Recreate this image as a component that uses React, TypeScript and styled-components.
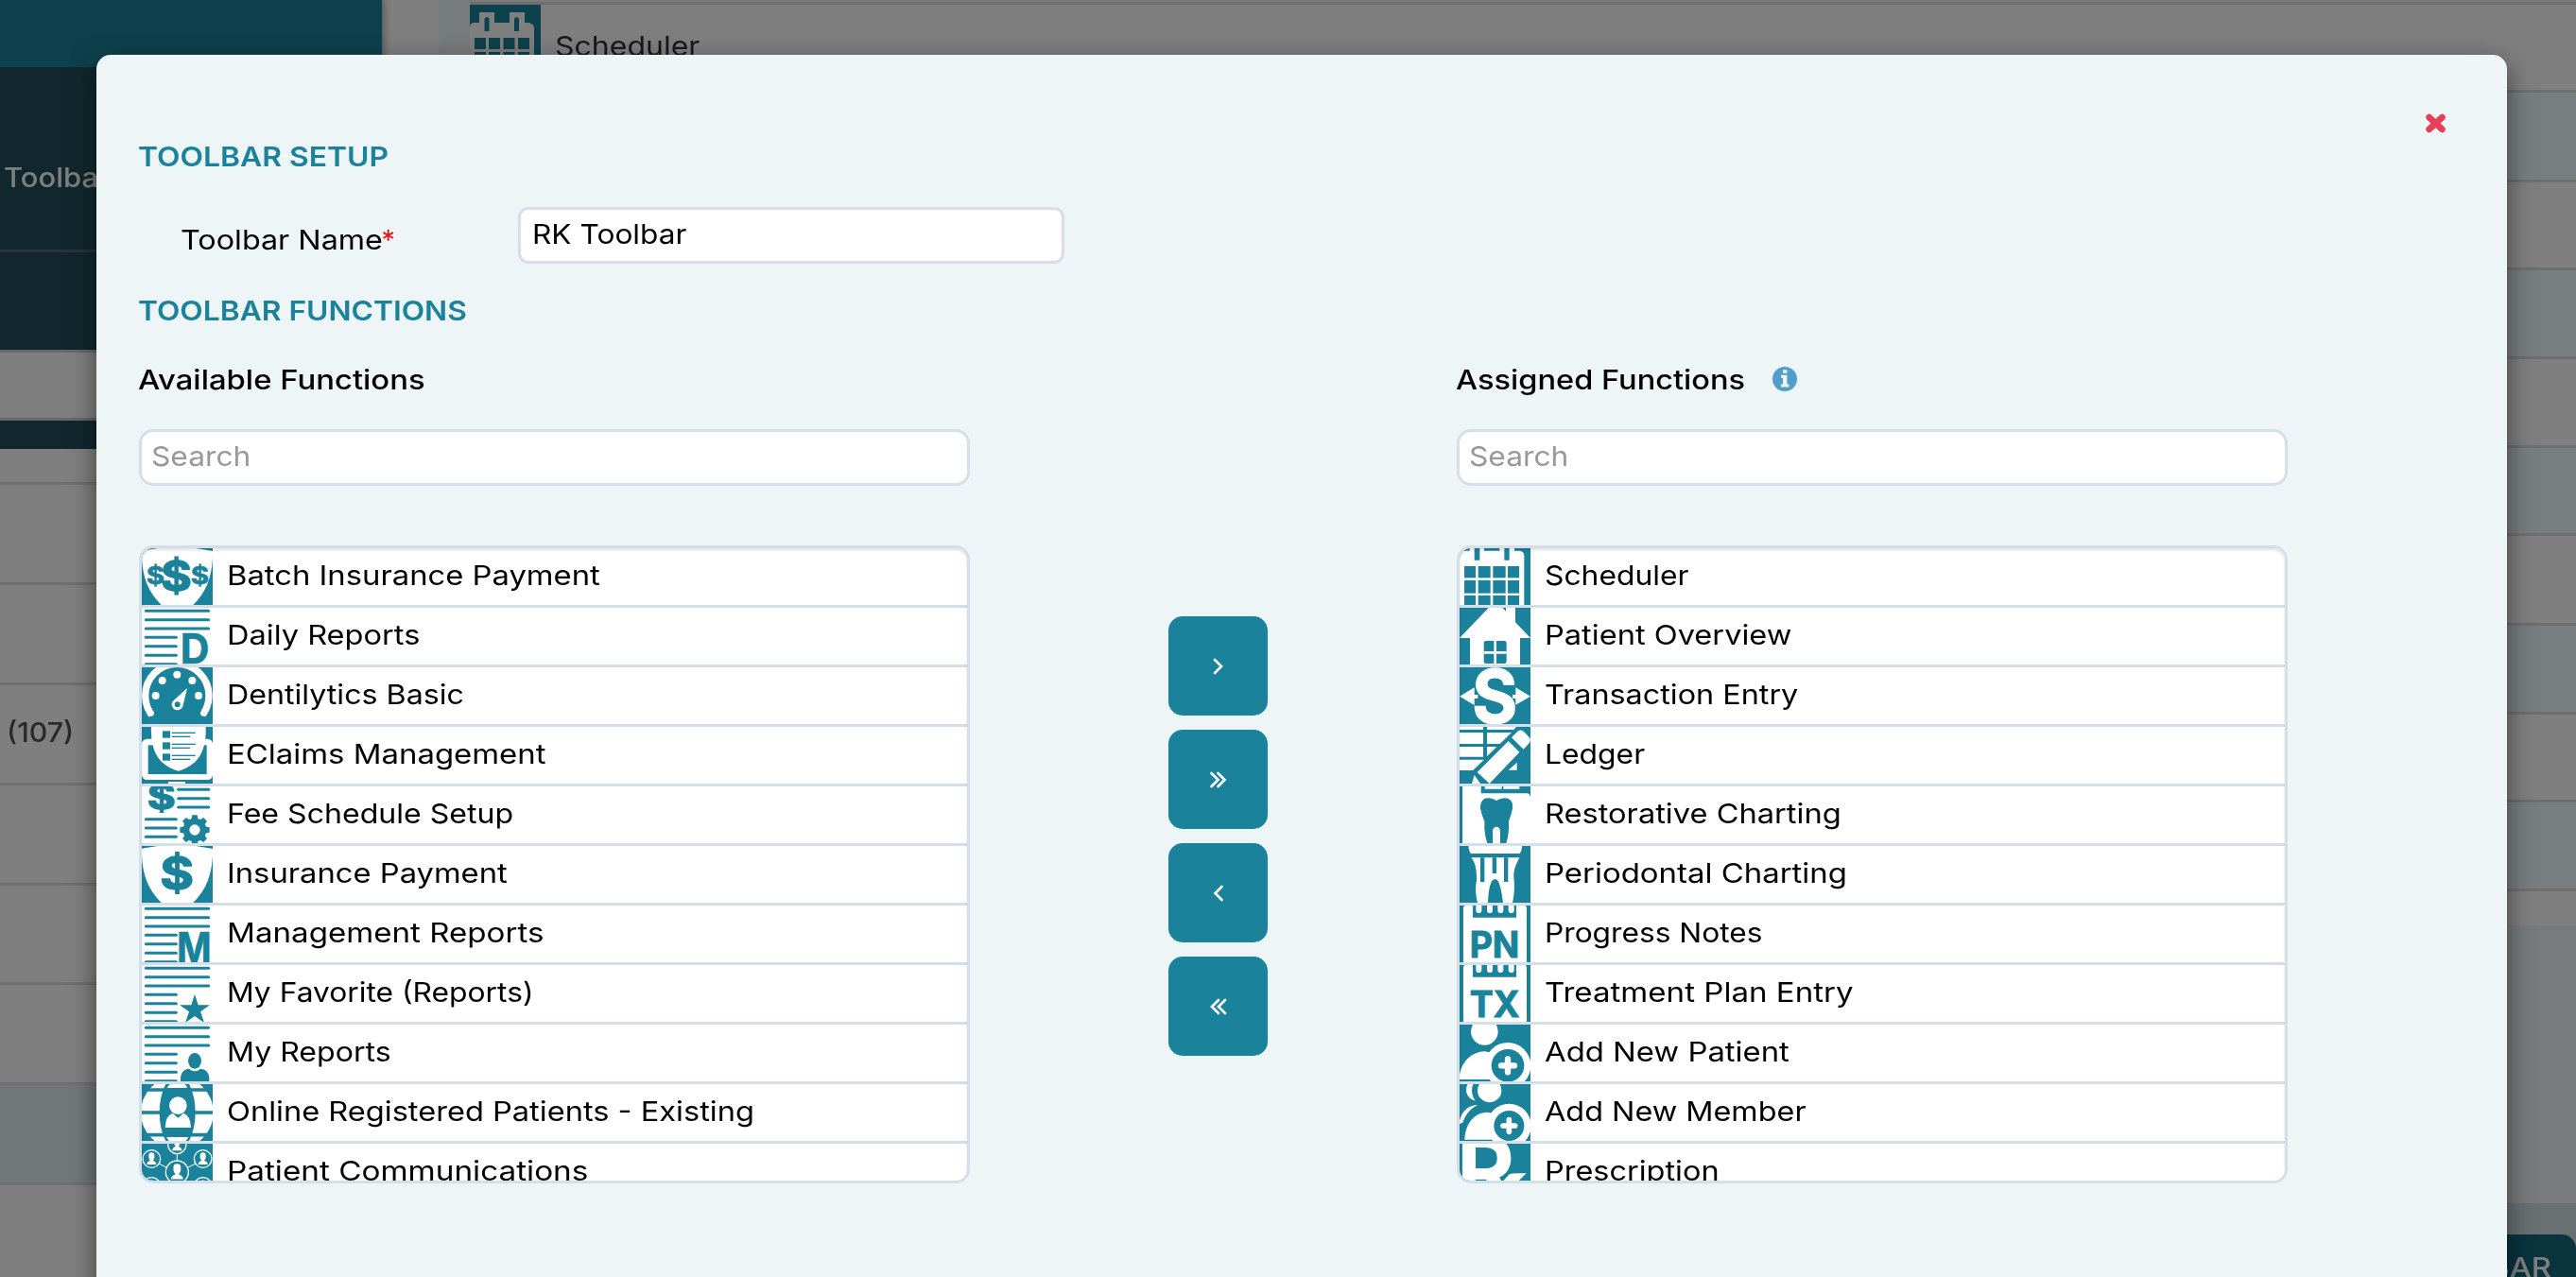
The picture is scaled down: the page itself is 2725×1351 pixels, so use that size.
import React, { ReactNode, useLayoutEffect, useRef, useState } from 'react';
import styled, { createGlobalStyle } from 'styled-components';

const TEAL = '#1a839b';
const FONT = 'Inter, "Open Sans", "Liberation Sans", sans-serif';

const GlobalStyle = createGlobalStyle`
  * { box-sizing: border-box; }
  html, body { margin: 0; height: 1351px; overflow: hidden; background: #fff; }
  body { font-family: ${FONT}; font-size: 28.9px; line-height: 30px; color: #000; }
`;

/* ---------- text stretched to the wide proportions of the brand face ---------- */

const FitBox = styled.span`
  display: inline-block;
  flex: none;
  white-space: nowrap;
  text-align: left;
`;
const FitInk = styled.span`
  display: inline-block;
  transform-origin: 0 50%;
`;

function Fit({ w, children }: { w: number; children: string }) {
  const ref = useRef<HTMLSpanElement>(null);
  const [scale, setScale] = useState(1);
  useLayoutEffect(() => {
    const el = ref.current;
    const ctx = document.createElement('canvas').getContext('2d');
    if (!el || !ctx) return;
    const cs = getComputedStyle(el);
    ctx.font = `${cs.fontWeight} ${cs.fontSize} ${cs.fontFamily}`;
    setScale(w / ctx.measureText(children).actualBoundingBoxRight);
  }, [w, children]);
  return (
    <FitBox style={{ width: w }}>
      <FitInk ref={ref} style={{ transform: `scaleX(${scale})` }}>{children}</FitInk>
    </FitBox>
  );
}

/* ---------- page behind the dialog ---------- */

const Page = styled.div`
  position: relative;
  width: 2725px;
  height: 1351px;
  overflow: hidden;
  display: flex;
  background: #fff;
`;
const Sidebar = styled.aside`
  width: 404px;
  height: 1351px;
  flex: none;
  box-shadow: 2px 0 8px rgba(0, 0, 0, 0.35);
`;
const Band = styled.div<{ $h: number; $bg: string; $line?: string }>`
  height: ${p => p.$h}px;
  background: ${p => p.$bg};
  border-bottom: ${p => (p.$line ? `3px solid ${p.$line}` : '0')};
`;
const NavItem = styled(Band)`
  padding: 102px 0 0 4px;
  color: #fff;
  font-weight: 500;
`;
const CountRow = styled(Band)`
  padding: 35px 0 0 7px;
  color: #555;
  font-weight: 500;
`;
const Main = styled.main`
  flex: 1;
  margin-left: 60px;
  border-left: 3px solid #ecf8ff;
  background: #f0f7f7;
`;
const TableTop = styled.div`
  margin-left: 30px;
  height: 5px;
  border-bottom: 3px solid #dcdcdc;
`;
const TableRow = styled.div<{ $h: number; $alt?: boolean; $last?: boolean }>`
  margin-left: 30px;
  height: ${p => p.$h}px;
  display: flex;
  background: ${p => (p.$alt ? '#f1fcff' : '#fff')};
  border-bottom: ${p => (p.$last ? '0' : '3px solid #dcdcdc')};
`;
const TableText = styled.div`
  padding: 29px 0 0 15px;
  color: #333;
`;
const Footer = styled.div`
  margin-top: 294px;
  height: 78px;
  padding: 33px 0 0;
  display: flex;
  justify-content: flex-end;
  background: #d3e0e4;
`;
const FooterButton = styled.div`
  width: 300px;
  height: 60px;
  border-radius: 15px;
  padding: 19.5px 27px 0 0;
  text-align: right;
  color: #fff;
  font-weight: 500;
  background: #14697c;
`;

/* ---------- dialog ---------- */

const Backdrop = styled.div`
  position: absolute;
  inset: 0;
  background: rgba(0, 0, 0, 0.5);
`;
const Dialog = styled.section`
  position: absolute;
  left: 102px;
  top: 58px;
  width: 2550px;
  height: 1400px;
  padding: 60px 64px 0 45px;
  border-radius: 15px;
  background: #edf5f7;
  box-shadow: 0 9.4px 28.1px rgba(0, 0, 0, 0.5);
`;
const Header = styled.header`
  height: 62.5px;
  display: flex;
  justify-content: space-between;
  align-items: flex-end;
`;
const Heading = styled.h2`
  margin: 0 0 0 -1.5px;
  font-size: inherit;
  font-weight: 600;
  color: ${TEAL};
`;
const CloseButton = styled.div`
  align-self: flex-start;
  line-height: 0;
  filter: drop-shadow(0 2px 0 #fff);
`;
const NameRow = styled.div`
  margin: 38.5px 0 34.5px;
  padding-left: 43.5px;
  display: flex;
`;
const NameLabel = styled.div`
  width: 357px;
  padding-top: 19.5px;
`;
const Star = styled.span`
  color: #e11;
`;
const Field = styled.div<{ $w: number; $tint: string; $r: number; $pad: number }>`
  width: ${p => p.$w}px;
  height: 60px;
  padding-left: ${p => p.$pad}px;
  border: 3px solid ${p => p.$tint};
  border-radius: ${p => p.$r}px;
  line-height: 51px;
  background: #fff;
`;
const SearchField = styled(Field)`
  margin-top: 37.5px;
  color: #999;
`;
const Columns = styled.div`
  margin-top: 43px;
  display: grid;
  grid-template-columns: 878.5px 515.5px 878.5px;
`;
const Column = styled.div``;
const ColumnTitle = styled.div`
  height: 30px;
  margin-left: -1.5px;
  display: flex;
  gap: 30px;
  font-weight: 500;
`;
const InfoIcon = styled.svg`
  width: 26px;
  height: 26px;
  margin-top: 1.5px;
  overflow: visible;
`;
const List = styled.div`
  margin-top: 63px;
  height: 675px;
  overflow: hidden;
  border: 3px solid #d5dfea;
  border-radius: 15px;
  background: #fff;
  position: relative;
  &::after {
    content: '';
    position: absolute;
    inset: 0;
    border-radius: 12px;
    box-shadow: inset 0 2px 3px rgba(0, 0, 0, 0.12);
  }
`;
const Item = styled.div`
  height: 63px;
  display: flex;
  gap: 15px;
  line-height: 57px;
  border-bottom: 3px solid #d5dfea;
`;
const Mover = styled.div`
  padding: 265.5px 0 0 210.5px;
  display: flex;
  flex-direction: column;
  gap: 15px;
`;
const MoveButton = styled.div`
  width: 105px;
  height: 105px;
  border-radius: 15px;
  display: grid;
  place-items: center;
  background: ${TEAL};
`;

/* ---------- function icons: drawn on a 225 x 180 grid ---------- */

const Tile = styled.svg`
  width: 75px;
  height: 60px;
  flex: none;
  display: block;
  background: ${TEAL};
`;
const Glyph = styled.text`
  font-family: ${FONT};
  font-weight: 700;
`;

const T = TEAL;
const W = '#fff';
const White = () => <rect width="225" height="180" fill={W} />;

function Char({ x, y, size, w, fill = T, children, stroke = 0 }: {
  x: number; y: number; size: number; w: number; fill?: string; children: string; stroke?: number;
}) {
  return (
    <Glyph x={x} y={y} fontSize={size} textLength={w} lengthAdjust="spacingAndGlyphs" fill={fill}
      stroke={fill} strokeWidth={stroke}>{children}</Glyph>
  );
}
function Lines({ ys, x1, x2 }: { ys: number[]; x1: number; x2: number }) {
  return <>{ys.map(y => <path key={y} d={`M${x1 + 4} ${y}H${x2 - 4}`} stroke={T} strokeWidth="9" strokeLinecap="round" />)}</>;
}
const Report = ({ children }: { children: ReactNode }) => (
  <><White /><Lines ys={[10, 38, 66]} x1={9} x2={216} /><Lines ys={[94, 122, 151, 179]} x1={9} x2={113} />{children}</>
);
const Shield = () => <path d="M0 8L50 0H172L225 9V30C222 90 205 140 163 180H62C20 140 2 90 0 30Z" fill={W} />;
const Bust = ({ x, y, s }: { x: number; y: number; s: number }) => (
  <g transform={`translate(${x} ${y}) scale(${s})`} fill={W}>
    <path d="M-9 -14Q-9 -22 0 -22Q9 -22 9 -14V-6Q8 0 4 4Q14 6 15 16H-15Q-14 6 -4 4Q-8 0 -9 -6Z" />
  </g>
);
const Notes = ({ text }: { text: string }) => (
  <>
    <path d="M12 180V8Q12 3 16 0H209Q213 3 213 8V180Z" fill={W} />
    <path d="M42 0H180V38H42Z" fill={T} />
    {[52, 87, 121, 155].map(x => <path key={x} d={`M${x} 0H${x + 18}V14Q${x + 18} 24 ${x + 9} 24Q${x} 24 ${x} 14Z`} fill={W} />)}
    <Char x={32} y={164} size={114} w={158} stroke={3}>{text}</Char>
  </>
);

const ART: Record<string, ReactNode> = {
  batch: <><Shield />
    <Char x={14} y={115} size={75} w={58} stroke={2}>$</Char>
    <Char x={60} y={136} size={130} w={98} stroke={4}>$</Char>
    <Char x={155} y={115} size={75} w={58} stroke={2}>$</Char></>,
  daily: <Report><Char x={122} y={178} size={132} w={92} stroke={2}>D</Char></Report>,
  gauge: <>
    <circle cx="112" cy="90" r="101" fill="none" stroke={W} strokeWidth="22" />
    <path d="M38 138L22 160L0 190H225L203 160L187 138L112 160Z" fill={T} />
    <path d="M20 130L30 146M205 130L195 146" stroke={W} strokeWidth="18" strokeLinecap="round" />
    <circle cx="112" cy="90" r="88" fill={T} />
    {[[112, 23], [65, 42], [160, 42], [44, 90], [180, 90]].map(([x, y]) => <circle key={`${x}-${y}`} cx={x} cy={y} r="12" fill={W} />)}
    <path d="M144 66L131 120A18 18 0 1 1 98 108Z" fill={W} /><circle cx="113" cy="118" r="9" fill={T} />
  </>,
  eclaims: <>
    <rect x="0" y="38" width="225" height="130" rx="16" fill={W} /><rect x="20" y="58" width="186" height="92" fill={T} />
    <path d="M30 0H203C205 60 190 120 116 140C42 120 28 60 30 0Z" fill={W} />
    {[13, 49, 85].map(y => <g key={y} fill={T}><rect x="66" y={y} width="24" height="22" /><rect x="95" y={y + 4} width="75" height="4" /><rect x="95" y={y + 16} width="58" height="4" /></g>)}
    <rect x="84" y="174" width="54" height="6" fill={W} />
  </>,
  fee: <><White /><Char x={17} y={73} size={112} w={90} stroke={4}>$</Char>
    <Lines ys={[10, 38, 66]} x1={112} x2={216} /><Lines ys={[104, 132, 160]} x1={9} x2={113} />
    <circle cx="168" cy="138" r="27" fill="none" stroke={T} strokeWidth="20" />
    {[0, 45, 90, 135, 180, 225, 270, 315].map(a => <path key={a} d="M160 91H176L179 106H157Z" fill={T} transform={`rotate(${a} 168 138)`} />)}</>,
  insurance: <><Shield /><Char x={58} y={138} size={143} w={108} stroke={4}>$</Char></>,
  management: <Report><Char x={111} y={187} size={138} w={110} stroke={2}>M</Char></Report>,
  favorite: <Report><path d="M168 92L179 127H216L186 148L198 183L168 162L138 183L150 148L120 127H157Z" fill={T} /></Report>,
  mine: <Report><ellipse cx="168" cy="115" rx="21" ry="25" fill={T} /><path d="M123 180V168Q125 142 150 140Q168 156 186 140Q212 142 214 168V180Z" fill={T} /></Report>,
  online: <>
    <circle cx="112" cy="90" r="115" fill={W} />
    <path d="M0 18H225M0 90H225M0 161H225" stroke={T} strokeWidth="11" />
    <ellipse cx="113" cy="90" rx="57" ry="118" fill={T} />
    <path d="M80 12Q84 4 90 0H136Q142 4 145 12ZM78 168H148Q144 176 140 180H86Z" fill={W} />
    <circle cx="115" cy="68" r="28" fill={W} /><path d="M74 138Q76 98 98 92L115 107L132 92Q154 98 156 138Z" fill={W} />
  </>,
  comms: <>
    <path d="M112 30V54M54 63L80 76M171 63L145 76" stroke={W} strokeWidth="3" />
    {[[112, 3, 29], [31, 48, 28], [194, 48, 28], [112, 90, 36], [31, 136, 29], [194, 136, 29]].map(([x, y, r]) =>
      <g key={`${x}-${y}`}><circle cx={x} cy={y} r={r} fill="none" stroke={W} strokeWidth="4" /><Bust x={x} y={y + 2} s={r / 28} /></g>)}
  </>,
  scheduler: <>
    <path d="M0 180V24Q0 8 14 8H32V0H174V8H190Q205 10 205 24V180Z" fill={W} />
    <path d="M47 0H64V38H47ZM142 0H158V38H142ZM78 0H127V8H78Z" fill={T} />
    {[[57, 37], [102, 41], [150, 36]].map(([y, h]) => [[15, 36], [59, 39], [106, 40], [153, 36]].map(([x, w]) =>
      <rect key={`${x}-${y}`} x={x} y={y} width={w} height={h} fill={T} />))}
  </>,
  home: <>
    <path d="M0 96L92 0H136L147 11V0H177V46L225 96H192V180H33V96Z" fill={W} />
    <rect x="77" y="105" width="72" height="72" rx="7" fill={T} /><path d="M113 105V177M77 142H149" stroke={W} strokeWidth="8" />
  </>,
  transaction: <>
    <path d="M0 92L47 64V87H58V99H47V120ZM225 92L178 64V87H168V99H178V119Z" fill={W} />
    <Char x={40} y={176} size={236} w={144} fill={W} stroke={4}>S</Char>
  </>,
  ledger: <>
    <path d="M0 0H180L172 9H0ZM0 18H165L128 54H0ZM0 63H118L85 95H0ZM0 104H78L42 138H0Z" fill={W} />
    <rect x="75" y="0" width="12" height="97" fill={T} />
    <path d="M155 45L190 80L95 180L56 144Z" fill={W} />
    <path d="M165 34L181 17Q191 6 203 14L222 34Q227 42 222 50L203 71Z" fill={W} />
    <path d="M47 153L66 180H39ZM182 113V137H155Z" fill={W} />
  </>,
  restorative: <>
    <path d="M9 0H68V22H214Q223 23 225 34V180H9Z" fill={W} />
    <path d="M80 0H134V8H80ZM139 0H190V8H139Z" fill={W} />
    <path d="M80 38Q100 33 117 45Q134 33 154 38Q171 46 168 70Q164 92 156 110Q158 150 148 180H129V142Q128 128 117 128Q106 128 105 142V180H88Q77 150 79 110Q70 92 66 70Q65 46 80 38Z" fill={T} />
  </>,
  perio: <>
    <path d="M28 0H198Q197 20 190 24H36Q30 18 28 0Z" fill={W} />
    <path d="M37 37H190C180 58 168 78 173 110C175 140 172 160 168 180H138C132 130 124 105 113 105C100 105 92 130 90 180H57C50 150 50 130 54 110C55 78 50 52 37 37Z" fill={W} />
    <path d="M66 37H79V114H66ZM104 37H117V87H104ZM141 37H154V114H141Z" fill={T} />
  </>,
  notes: <Notes text="PN" />,
  plan: <Notes text="TX" />,
  patient: <>
    <circle cx="79" cy="22" r="43" fill={W} /><path d="M0 174V158C8 115 40 86 80 85L115 92V174Z" fill={W} />
    <circle cx="153" cy="130" r="73" fill={W} /><circle cx="153" cy="130" r="52" fill={T} />
    <path d="M153 109V151M132 130H174" stroke={W} strokeWidth="19" strokeLinecap="round" />
  </>,
  member: <>
    <circle cx="56" cy="18" r="35" fill={W} /><circle cx="95" cy="20" r="56" fill={T} /><circle cx="95" cy="20" r="38" fill={W} />
    <path d="M0 126V115C8 85 28 66 58 66C30 80 18 100 10 122Z" fill={W} />
    <path d="M16 176C18 125 46 90 88 89L125 96V176Z" fill={W} />
    <circle cx="157" cy="132" r="70" fill={W} /><circle cx="157" cy="132" r="48" fill={T} />
    <path d="M157 113V151M138 132H176" stroke={W} strokeWidth="17" strokeLinecap="round" />
  </>,
  rx: <>
    <Char x={-10} y={190} size={294} w={186} fill={W} stroke={0}>R</Char>
    <path d="M132 125L158 97Q164 92 212 94L170 135Z" fill={W} />
  </>,
};

function FunctionIcon({ name }: { name: string }) {
  return <Tile viewBox="0 0 225 180">{ART[name]}</Tile>;
}

const AVAILABLE: [string, string, number][] = [
  ['batch', 'Batch Insurance Payment', 394.2], ['daily', 'Daily Reports', 202.9],
  ['gauge', 'Dentilytics Basic', 250.3], ['eclaims', 'EClaims Management', 337],
  ['fee', 'Fee Schedule Setup', 302.3], ['insurance', 'Insurance Payment', 296.2],
  ['management', 'Management Reports', 334], ['favorite', 'My Favorite (Reports)', 321.7],
  ['mine', 'My Reports', 172.2], ['online', 'Online Registered Patients - Existing', 556],
  ['comms', 'Patient Communications', 380.9],
];
const ASSIGNED: [string, string, number][] = [
  ['scheduler', 'Scheduler', 152.7], ['home', 'Patient Overview', 260.7],
  ['transaction', 'Transaction Entry', 268], ['ledger', 'Ledger', 106.3],
  ['restorative', 'Restorative Charting', 311.7], ['perio', 'Periodontal Charting', 318],
  ['notes', 'Progress Notes', 229], ['plan', 'Treatment Plan Entry', 326.3],
  ['patient', 'Add New Patient', 258.3], ['member', 'Add New Member', 276.7],
  ['rx', 'Prescription', 182.3],
];

function FunctionList({ items }: { items: [string, string, number][] }) {
  return (
    <List>
      {items.map(([icon, label, w]) => (
        <Item key={label}><FunctionIcon name={icon} /><Fit w={w}>{label}</Fit></Item>
      ))}
    </List>
  );
}

function Arrow({ d }: { d: string }) {
  return (
    <MoveButton>
      <svg width="20" height="20" viewBox="0 0 20 20" fill="none" stroke="#fff" strokeWidth="2.7" strokeLinecap="round" strokeLinejoin="miter">
        <path d={d} />
      </svg>
    </MoveButton>
  );
}

const FullTile = styled(Tile)`
  height: 75px;
`;

/* The table shows the calendar uncropped, with its binding rings. */
function FunctionIconFull() {
  return (
    <FullTile viewBox="0 0 75 75">
      <path d="M0 75V24Q0 19 5 19H10V8H26V19H42V8H58V19H62Q68 20 68 25V75Z" fill={W} />
      <path d="M15.5 15Q18 11 20.5 15V28H15.5ZM47 15Q49.5 11 52 15V28H47Z" fill={T} />
      {[35, 50].map(y => [5, 20, 35.5, 51].map(x => <rect key={`${x}-${y}`} x={x} y={y} width="12" height="12" fill={T} />))}
    </FullTile>
  );
}

export default function App() {
  return (
    <Page>
      <GlobalStyle />
      <Sidebar>
        <Band $h={71} $bg={TEAL} />
        <NavItem $h={196} $bg="#20505a" $line="#56657a"><Fit w={128}>Toolbars</Fit></NavItem>
        <Band $h={103} $bg="#20505a" />
        <Band $h={3} $bg="#d0d0d0" />
        <Band $h={72} $bg="#fff" $line="#d0d0d0" />
        <Band $h={30} $bg="#20505a" />
        <Band $h={38} $bg="#fff" $line="#dedede" />
        <Band $h={106} $bg="#fff" $line="#dedede" />
        <Band $h={106} $bg="#fff" $line="#dedede" />
        <CountRow $h={106} $bg="#fff" $line="#dedede"><Fit w={68.5}>(107)</Fit></CountRow>
        <Band $h={106} $bg="#fff" $line="#dedede" />
        <Band $h={105} $bg="#fff" $line="#dedede" />
        <Band $h={106} $bg="#fff" $line="#dedede" />
        <Band $h={106} $bg="#e1f0f4" $line="#dedede" />
        <Band $h={97} $bg="#fff" />
      </Sidebar>
      <Main>
        <TableTop />
        <TableRow $h={93}>
          <FunctionIconFull />
          <TableText><Fit w={153.5}>Scheduler</Fit></TableText>
        </TableRow>
        <TableRow $h={95} $alt /><TableRow $h={93} />
        <TableRow $h={94} $alt /><TableRow $h={94} />
        <TableRow $h={93} $alt /><TableRow $h={95} />
        <TableRow $h={94} $alt /><TableRow $h={93} />
        <TableRow $h={94} $alt /><TableRow $h={36} $last />
        <Footer><FooterButton><Fit w={232}>ADD TOOLBAR</Fit></FooterButton></Footer>
      </Main>
      <Backdrop />
      <Dialog>
        <Header>
          <Heading><Fit w={264.3}>TOOLBAR SETUP</Fit></Heading>
          <CloseButton>
            <svg width="24" height="24" viewBox="0 0 24 24">
              <path d="M5.7 6.2L19.3 18.8M19.3 6.2L5.7 18.8" stroke="#e83e5a" strokeWidth="6.9" strokeLinecap="round" />
            </svg>
          </CloseButton>
        </Header>
        <NameRow>
          <NameLabel><Fit w={213}>Toolbar Name</Fit><Star>*</Star></NameLabel>
          <Field $w={578} $tint="#d9dde9" $r={11} $pad={12}><Fit w={163.5}>RK Toolbar</Fit></Field>
        </NameRow>
        <Heading><Fit w={347}>TOOLBAR FUNCTIONS</Fit></Heading>
        <Columns>
          <Column>
            <ColumnTitle><Fit w={303}>Available Functions</Fit></ColumnTitle>
            <SearchField $w={878.5} $tint="#d5dfea" $r={15} $pad={9.5}><Fit w={103}>Search</Fit></SearchField>
            <FunctionList items={AVAILABLE} />
          </Column>
          <Mover>
            <Arrow d="M6 3L13 10L6 17" />
            <Arrow d="M2.5 3L9.5 10L2.5 17M9.5 3L16.5 10L9.5 17" />
            <Arrow d="M13.5 3L6.5 10L13.5 17" />
            <Arrow d="M10 3L3 10L10 17M17 3L10 10L17 17" />
          </Mover>
          <Column>
            <ColumnTitle>
              <Fit w={305.5}>Assigned Functions</Fit>
              <InfoIcon viewBox="0 0 26 26">
                <circle cx="13" cy="13" r="13" fill="#519ecb" />
                <path d="M11 3.2h4.4v3.6H11zM9 8.800h6.4v9.600h2v3H9v-3h2v-6.600H9z" fill="#edf5f7" />
              </InfoIcon>
            </ColumnTitle>
            <SearchField $w={878.5} $tint="#d5dfea" $r={15} $pad={9.5}><Fit w={103}>Search</Fit></SearchField>
            <FunctionList items={ASSIGNED} />
          </Column>
        </Columns>
      </Dialog>
    </Page>
  );
}
